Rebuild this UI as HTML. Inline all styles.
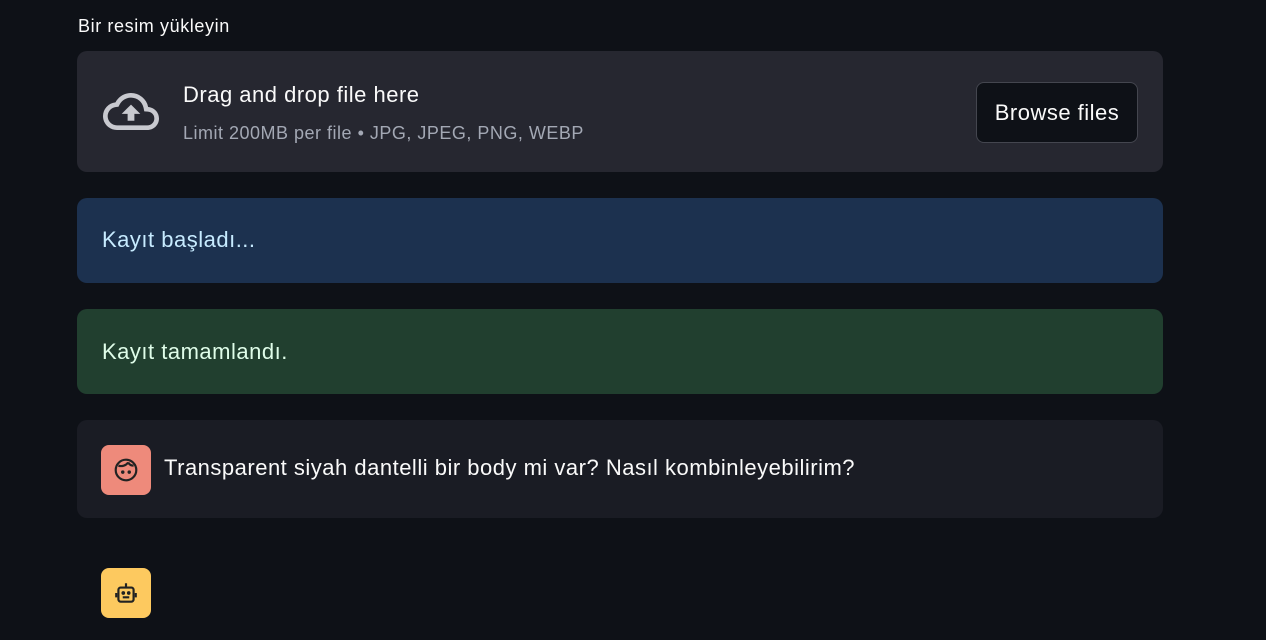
<!DOCTYPE html>
<html><head><meta charset="utf-8"><style>
body{margin:0;background:#0e1117;width:1266px;height:640px;overflow:hidden;font-family:"Liberation Sans",sans-serif;color:#fafafa;position:relative}
.a{position:absolute}
.box{position:absolute;left:77px;width:1086px;border-radius:10px}
.t{font-size:22px;letter-spacing:0.5px}
</style></head><body>
<div class="a" style="left:78px;top:16px;font-size:18px;letter-spacing:0.6px">Bir resim yükleyin</div>
<div class="box" style="top:51px;height:121px;background:#262730">
 <svg class="a" style="left:26px;top:42px" width="56" height="37" viewBox="0 4 24 16" preserveAspectRatio="none"><path d="M19.35 10.04A7.49 7.49 0 0 0 12 4C9.11 4 6.6 5.64 5.350 8.04A5.994 5.994 0 0 0 0 14c0 3.31 2.69 6 6 6h13c2.76 0 5-2.240 5-5 0-2.64-2.05-4.78-4.65-4.96zM19 18H6c-2.21 0-4-1.79-4-4 0-2.05 1.53-3.76 3.56-3.970l1.07-.11.5-.95A5.47 5.47 0 0 1 12 6c2.62 0 4.88 1.86 5.39 4.43l.3 1.5 1.53.11A2.98 2.98 0 0 1 22 15c0 1.65-1.35 3-3 3zM8 13h2.55v3h2.9v-3H16l-4-4z" fill="#c8c9cf"/></svg>
 <div class="a t" style="left:106px;top:31px">Drag and drop file here</div>
 <div class="a" style="left:106px;top:72px;font-size:18px;color:#a3a8b4;letter-spacing:0.5px">Limit 200MB per file • JPG, JPEG, PNG, WEBP</div>
 <div class="a t" style="left:899px;top:31px;width:162px;height:61px;border:1px solid #44464f;border-radius:8px;background:#0e1117;box-sizing:border-box;display:flex;align-items:center;justify-content:center">Browse files</div>
</div>
<div class="box" style="top:198px;height:85px;background:#1c314f;color:#c7ebff">
 <div class="a t" style="left:25px;top:29px">Kayıt başladı...</div></div>
<div class="box" style="top:309px;height:85px;background:#213f2f;color:#dffde9">
 <div class="a t" style="left:25px;top:30px">Kayıt tamamlandı.</div></div>
<div class="box" style="top:420px;height:98px;background:#1a1c24">
 <div class="a" style="left:24px;top:25px;width:50px;height:50px;border-radius:8px;background:#ee8a7b">
  <svg class="a" style="left:12px;top:12px" width="26" height="26" viewBox="0 0 24 24" fill="none" stroke="#222" stroke-width="2"><circle cx="12" cy="12" r="9.5"/><path d="M5 8c3 1 7 0 9-3M14 5c1 2 3 3 5 3"/><circle cx="9" cy="14" r=".6" fill="#222"/><circle cx="15" cy="14" r=".6" fill="#222"/></svg></div>
 <div class="a t" style="left:87px;top:35px">Transparent siyah dantelli bir body mi var? Nasıl kombinleyebilirim?</div>
</div>
<div class="a" style="left:101px;top:568px;width:50px;height:50px;border-radius:8px;background:#fdc95f">
 <svg class="a" style="left:12px;top:12px" width="26" height="26" viewBox="0 0 24 24" fill="none" stroke="#222" stroke-width="2"><rect x="5" y="7" width="14" height="13" rx="2"/><path d="M12 3v4M3 12v4M21 12v4M9 16h6"/><circle cx="9.5" cy="12" r=".7" fill="#222"/><circle cx="14.5" cy="12" r=".7" fill="#222"/></svg></div>
</body></html>
